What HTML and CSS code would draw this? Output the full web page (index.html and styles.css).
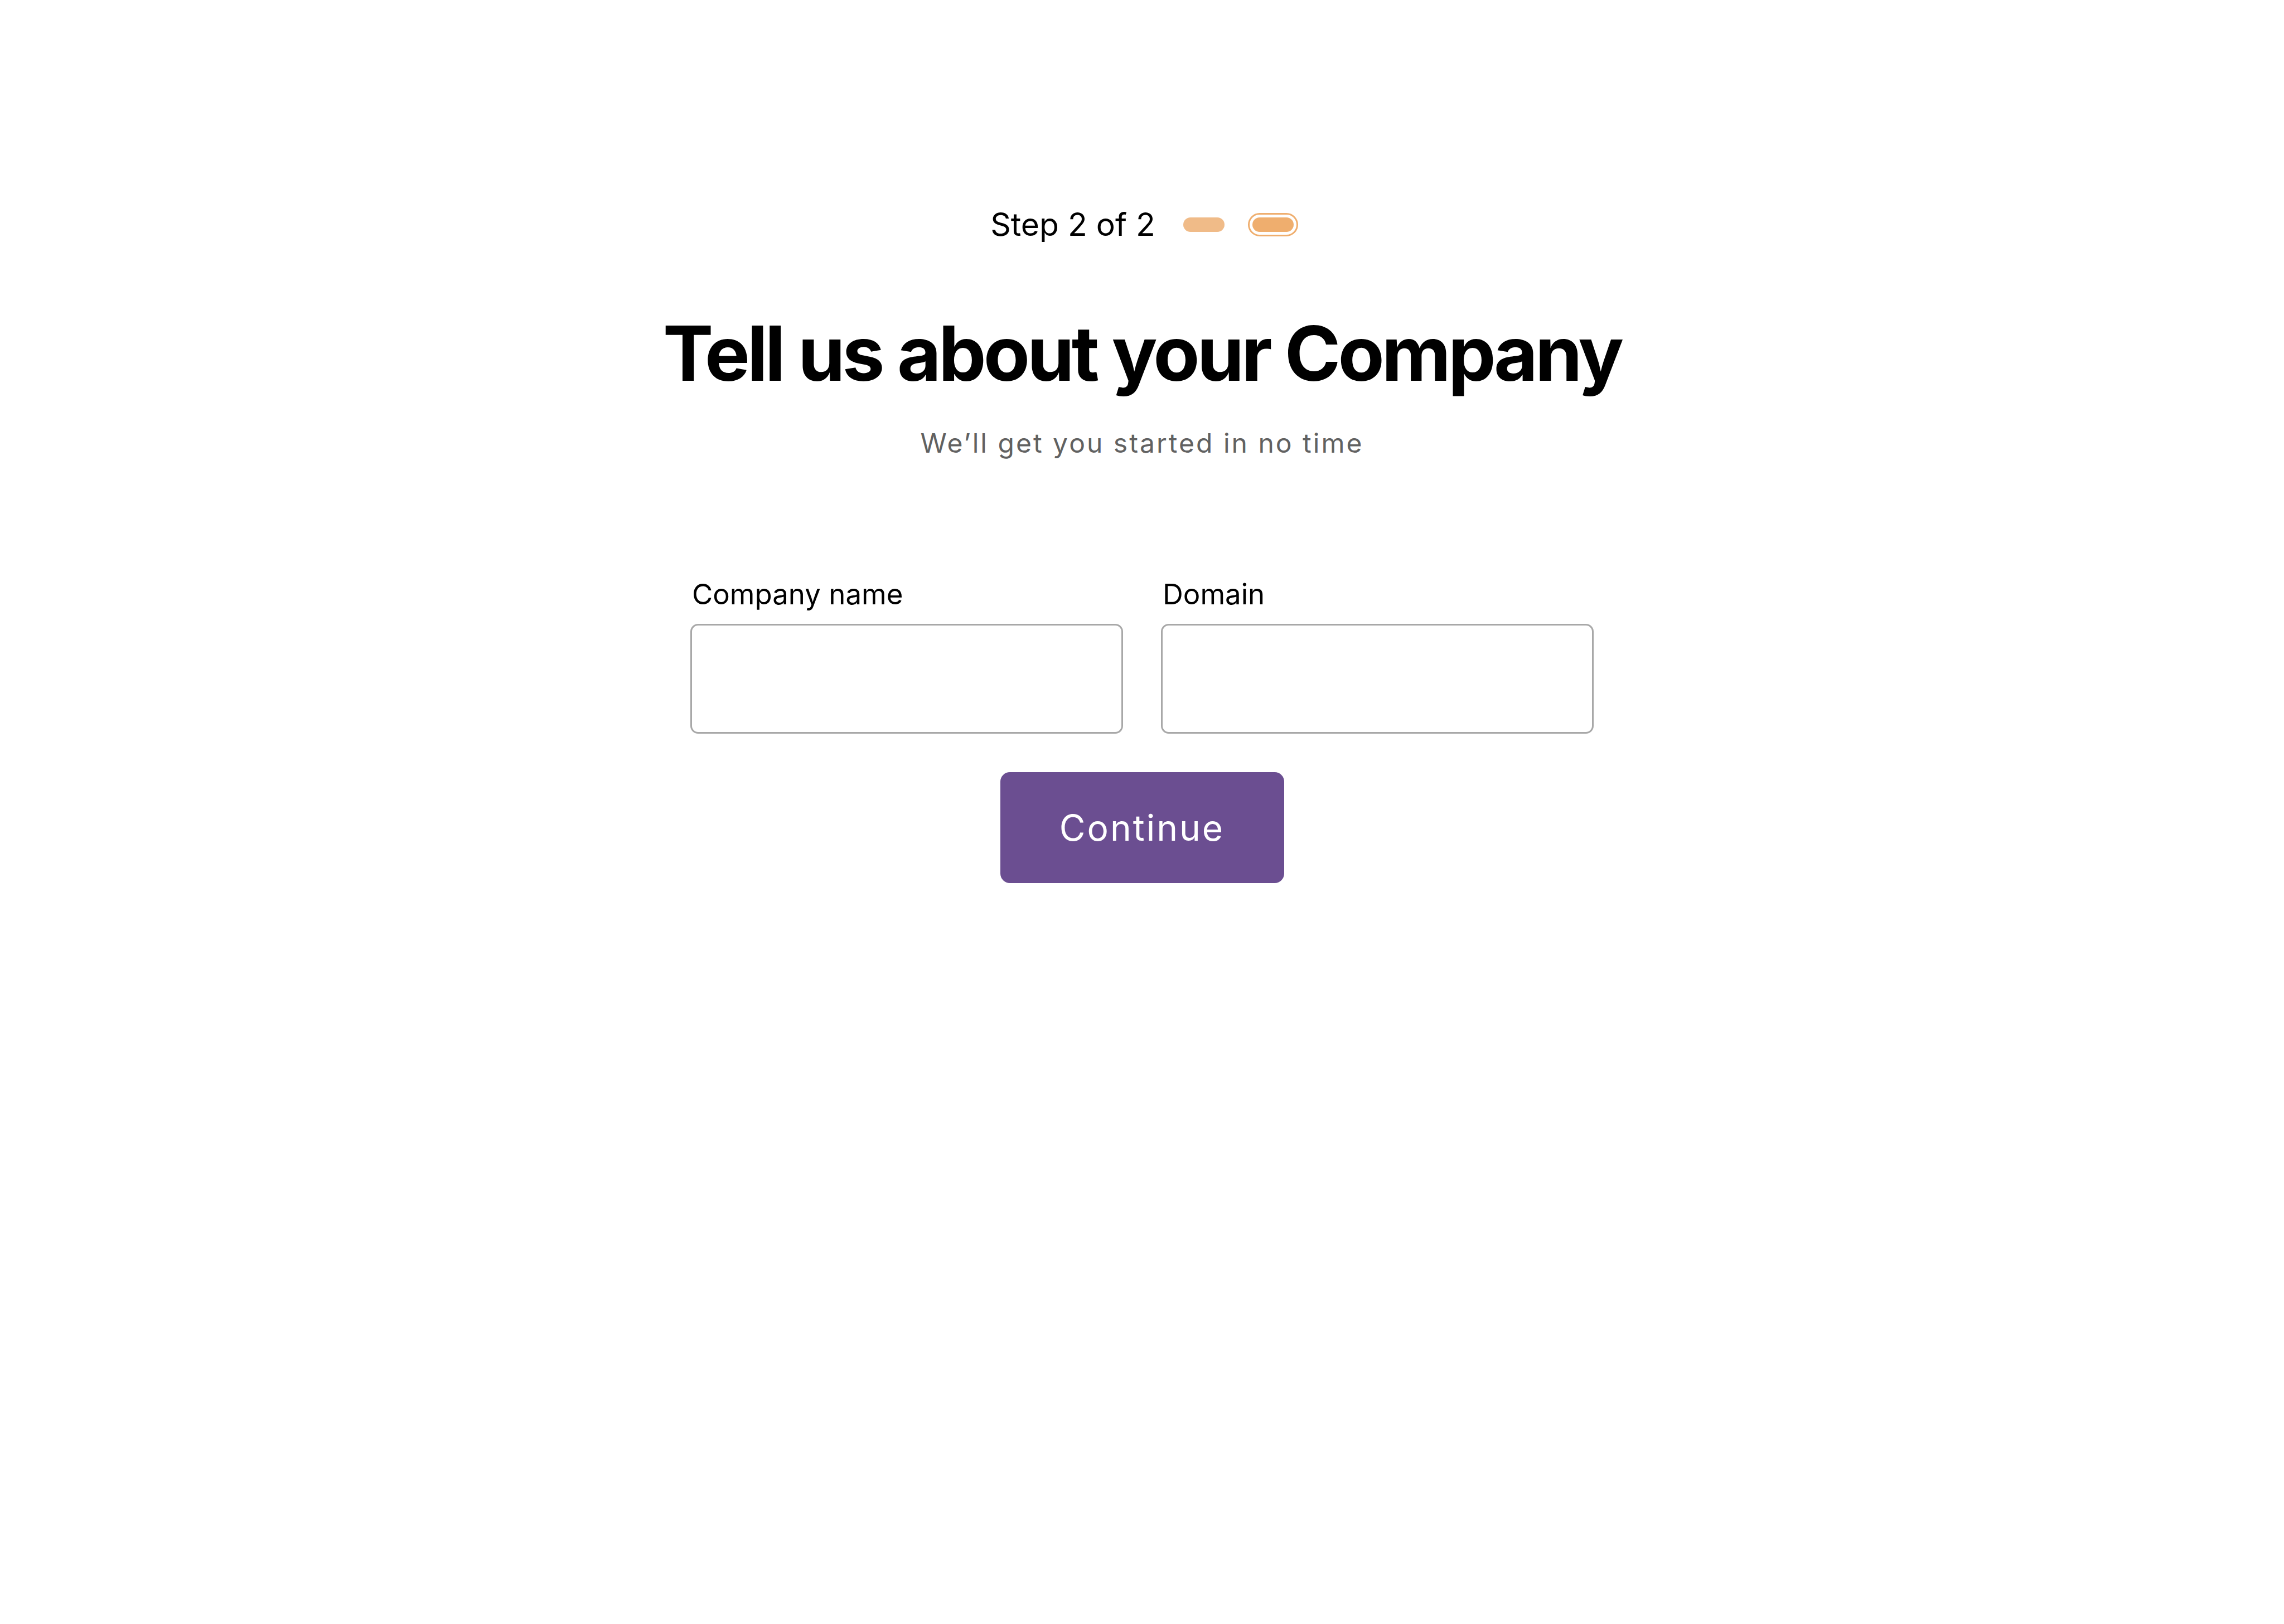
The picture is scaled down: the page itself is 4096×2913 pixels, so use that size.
FILE: index.html
```html
<!DOCTYPE html>
<html lang="en">
<head>
    <meta charset="UTF-8">
    <meta name="viewport" content="width=device-width, initial-scale=1.0">
    <title>Tell us about your Company</title>
    <link rel="stylesheet" href="styles.css">
</head>
<body>

<main class="onboarding">
    <div class="steps">
        <span class="steps-label">Step 2 of 2</span>
        <span class="step-dot done"></span>
        <span class="step-dot current"></span>
    </div>

    <h1 class="title">Tell us about your Company</h1>
    <p class="subtitle">We’ll get you started in no time</p>

    <form class="company-form" onsubmit="return false">
        <div class="fields">
            <label class="field">
                <span class="field-label">Company name</span>
                <input type="text" name="company">
            </label>
            <label class="field">
                <span class="field-label">Domain</span>
                <input type="text" name="domain">
            </label>
        </div>
        <button type="submit" class="btn-continue">Continue</button>
    </form>
</main>

</body>
</html>
```

FILE: styles.css
```css
body {
    margin: 0;
    background: #fff;
    color: #000;
    font-family: Inter, "Noto Sans", sans-serif;
}
.onboarding {
    display: flex;
    flex-direction: column;
    align-items: center;
    padding-top: 368px;
}

/* step indicator */
.steps {
    display: flex;
    align-items: center;
    gap: 50px;
    height: 69px;
}
.steps-label {
    font-size: 57px;
    line-height: 69px;
}
.step-dot {
    width: 74px;
    height: 26px;
    border-radius: 13px;
    background: #efae6e;
}
.step-dot.done { background: #f0bb88; }
.step-dot.current {
    outline: 3px solid #efae6e;
    outline-offset: 5px;
}

.title {
    margin: 115px 0 0;
    font-size: 136px;
    line-height: 163px;
    font-weight: 700;
    letter-spacing: -5px;
}
.subtitle {
    margin: 51px 0 0;
    font-size: 48px;
    line-height: 58px;
    color: #616161;
    letter-spacing: 3px;
}

/* form */
.company-form {
    width: 1620px;
    margin-top: 209px;
    display: flex;
    flex-direction: column;
    align-items: center;
}
.fields {
    width: 100%;
    display: flex;
    gap: 68px;
}
.field {
    flex: 1;
    min-width: 0;
    display: flex;
    flex-direction: column;
    gap: 21px;
}
.field-label {
    font-size: 51px;
    line-height: 65px;
    padding-left: 3px;
}
.field input {
    box-sizing: border-box;
    width: 100%;
    min-width: 0;
    height: 197px;
    border: 3px solid #a8a8a8;
    border-radius: 14px;
    padding: 0 36px;
    font-family: inherit;
    font-size: 51px;
    outline: none;
}
.btn-continue {
    margin-top: 69px;
    width: 509px;
    height: 199px;
    border: none;
    border-radius: 17px;
    background: #6b4e91;
    color: #fff;
    font-family: inherit;
    font-size: 64px;
    letter-spacing: 3px;
    cursor: pointer;
}
```
